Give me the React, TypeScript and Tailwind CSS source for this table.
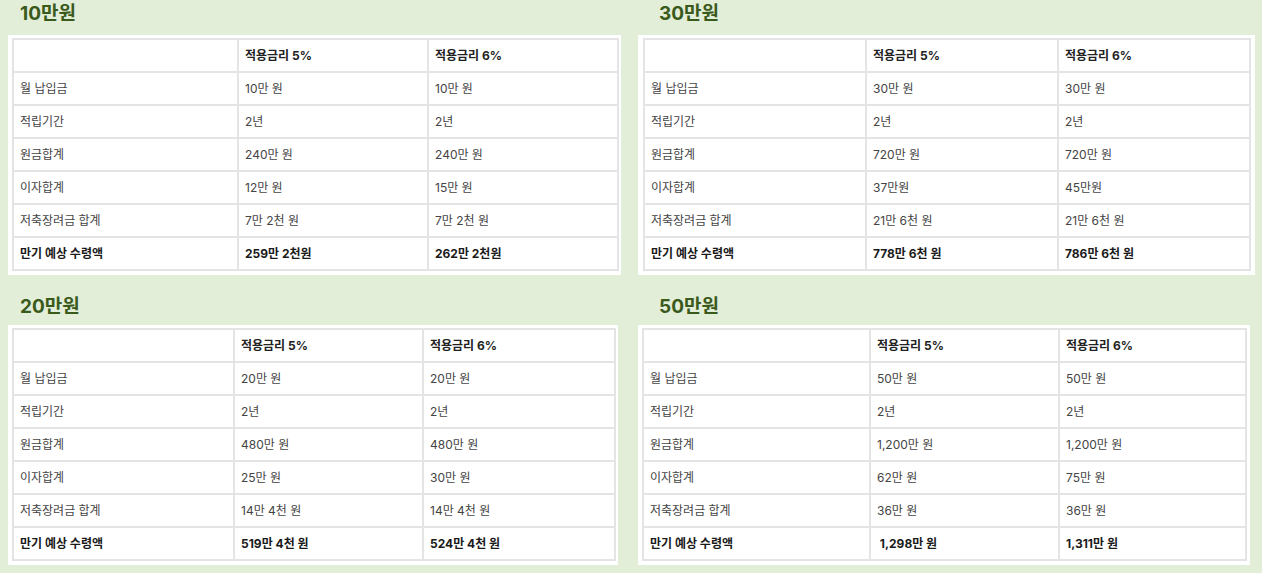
import React from "react"

type Plan = {
  title: string
  cols: [number, number, number]
  rows: [string, string][]
  last: [string, string]
}

const labels = ["월 납입금", "적립기간", "원금합계", "이자합계", "저축장려금 합계"]

const tl: Plan = {
  title: "10만원",
  cols: [225, 190, 190],
  rows: [
    ["10만 원", "10만 원"],
    ["2년", "2년"],
    ["240만 원", "240만 원"],
    ["12만 원", "15만 원"],
    ["7만 2천 원", "7만 2천 원"],
  ],
  last: ["259만 2천원", "262만 2천원"],
}

const bl: Plan = {
  title: "20만원",
  cols: [221, 189, 192],
  rows: [
    ["20만 원", "20만 원"],
    ["2년", "2년"],
    ["480만 원", "480만 원"],
    ["25만 원", "30만 원"],
    ["14만 4천 원", "14만 4천 원"],
  ],
  last: ["519만 4천 원", "524만 4천 원"],
}

const tr: Plan = {
  title: "30만원",
  cols: [222, 192, 192],
  rows: [
    ["30만 원", "30만 원"],
    ["2년", "2년"],
    ["720만 원", "720만 원"],
    ["37만원", "45만원"],
    ["21만 6천 원", "21만 6천 원"],
  ],
  last: ["778만 6천 원", "786만 6천 원"],
}

const br: Plan = {
  title: "50만원",
  cols: [227, 189, 187],
  rows: [
    ["50만 원", "50만 원"],
    ["2년", "2년"],
    ["1,200만 원", "1,200만 원"],
    ["62만 원", "75만 원"],
    ["36만 원", "36만 원"],
  ],
  last: ["\u00a01,298만 원", "1,311만 원"],
}

const td = "border-2 border-[#e4e4e4] h-[33px] px-[6px] py-0 align-middle"

function RateTable({ plan }: { plan: Plan }) {
  const width = plan.cols[0] + plan.cols[1] + plan.cols[2]
  return (
    <table className="table-fixed border-collapse" style={{ width }}>
      <colgroup>
        {plan.cols.map((w, i) => (
          <col key={i} style={{ width: w }} />
        ))}
      </colgroup>
      <tbody>
        <tr className="font-bold text-[#222]">
          <td className={td}></td>
          <td className={td}>적용금리 5%</td>
          <td className={td}>적용금리 6%</td>
        </tr>
        {plan.rows.map((r, i) => (
          <tr key={labels[i]} className="text-[#444]">
            <td className={td}>{labels[i]}</td>
            <td className={td}>{r[0]}</td>
            <td className={td}>{r[1]}</td>
          </tr>
        ))}
        <tr className="font-bold text-[#1a1a1a]">
          <td className={td}>만기 예상 수령액</td>
          <td className={td}>{plan.last[0]}</td>
          <td className={td}>{plan.last[1]}</td>
        </tr>
      </tbody>
    </table>
  )
}

function Title({ text, className }: { text: string; className: string }) {
  return (
    <h3 className={"text-[19px] font-bold leading-[28px] text-[#3a5a1c] " + className}>{text}</h3>
  )
}

export default function App() {
  return (
    <div
      className="w-[1262px] h-[573px] overflow-hidden bg-[#e2eed8] text-[12px]"
      style={{ fontFamily: 'Inter, "Noto Sans CJK KR", sans-serif' }}
    >
      <div className="flex pl-2 gap-[17px]">
        <div className="w-[613px] flex flex-col">
          <Title text={tl.title} className="pl-3 mb-[7px]" />
          <div className="bg-white p-1 pt-[3px] w-[613px]">
            <RateTable plan={tl} />
          </div>
          <Title text={bl.title} className="pl-3 mt-[18px] mb-[4px]" />
          <div className="bg-white p-1 pt-[3px] w-[610px]">
            <RateTable plan={bl} />
          </div>
        </div>
        <div className="w-[617px] flex flex-col">
          <Title text={tr.title} className="pl-[21px] mb-[7px]" />
          <div className="bg-white pl-[5px] pr-[6px] pt-[3px] pb-1 w-[617px]">
            <RateTable plan={tr} />
          </div>
          <Title text={br.title} className="pl-[21px] mt-[18px] mb-[4px]" />
          <div className="bg-white pl-1 pr-[5px] pt-[3px] pb-1 w-[612px]">
            <RateTable plan={br} />
          </div>
        </div>
      </div>
    </div>
  )
}
